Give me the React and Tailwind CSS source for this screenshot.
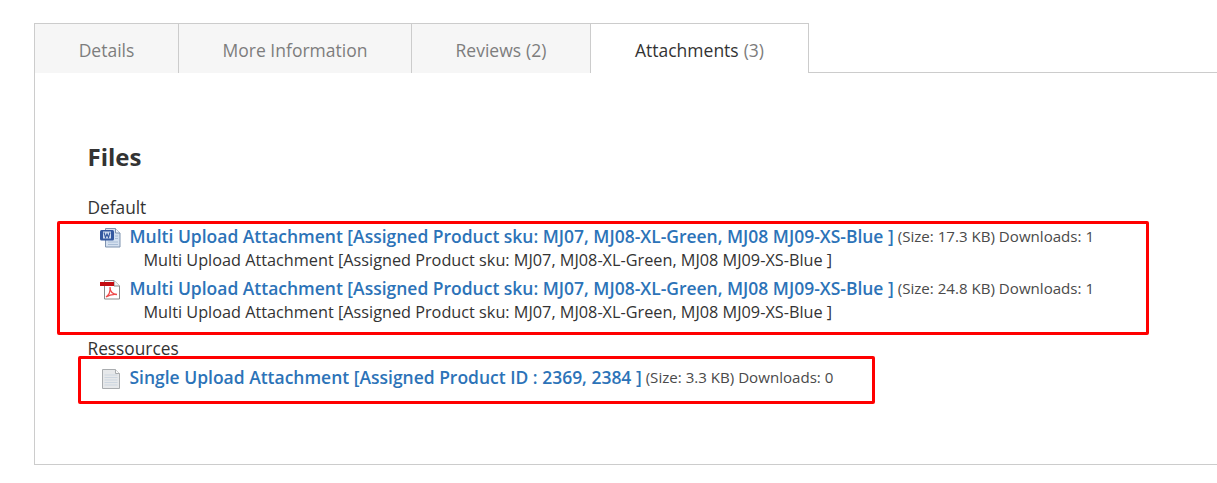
const font = { fontFamily: '"Open Sans", sans-serif' };

const WordIcon = () => (
  <svg width="22" height="20" viewBox="0 0 22 20" className="shrink-0">
    <path d="M5.500 .5h10l4.500 4.500v14h-14.500z" fill="#d5e1f0" stroke="#7f93b0" />
    <path d="M15.500 .5v4.500h4.500" fill="#f2f6fb" stroke="#7f93b0" />
    <path d="M8 14h10M8 16.500h10M15 8h3M15 10.500h3" stroke="#a9bdd6" />
    <rect x="0" y="2" width="14" height="10.500" rx="1.500" fill="#34589f" />
    <rect x="3" y="3.500" width="8" height="7" fill="#cfdcef" />
    <path d="M4 4.500l1.500 5 1.500-3.500 1.500 3.500 1.500-5" fill="none" stroke="#34589f" strokeWidth="1.100" />
  </svg>
);

const PdfIcon = () => (
  <svg width="22" height="20" viewBox="0 0 22 20" className="shrink-0">
    <path d="M4.500 .5h9.500l5.500 5.500v13h-15z" fill="#fff" stroke="#8a8a8a" />
    <path d="M14 .5v5.500h5.500" fill="#f2f2f2" stroke="#8a8a8a" />
    <rect x="0" y="2" width="14" height="4" fill="#c40d12" />
    <path d="M6 17c3-2 4.500-6 4-10 0 4 2.500 7 7 7.500-4-.5-8 .5-11 2.500z" fill="none" stroke="#ee4a4a" strokeWidth="1.300" />
  </svg>
);

const TextIcon = () => (
  <svg width="22" height="20" viewBox="0 0 22 20" className="shrink-0">
    <path d="M2.500 .5h13l4 4v15h-17z" fill="#e6e8ea" stroke="#a9acaf" />
    <path d="M15.500 .5v4h4" fill="#fafafa" stroke="#a9acaf" />
    <path d="M4.500 6h13M4.500 8.500h13M4.500 11h13M4.500 13.500h13M4.500 16h13" stroke="#cdd6e0" />
  </svg>
);

const Tab = ({ label, count, width, active }) => (
  <div
    className={
      active
        ? "flex h-[50px] items-center justify-center border border-b-0 border-[#cccccc] bg-white pt-[3px] text-[17.500px] text-[#333333]"
        : "flex h-[50px] items-center justify-center border-t border-l border-[#cccccc] bg-[#f6f6f6] pt-[3px] text-[17.500px] text-[#7d7d7d]"
    }
    style={{ width }}
  >
    {label}
    {count && <span className="ml-[5px] text-[#7d7d7d]">{count}</span>}
  </div>
);

const FileRow = ({ icon, title, size, downloads, note }) => (
  <div className="mb-[4px]">
    <div className="flex h-[26px] items-center">
      <div className="w-[42px] pt-[3px] pl-[12px]">{icon}</div>
      <a className="text-[17.480px] font-semibold whitespace-nowrap text-[#2c73b8]">{title}</a>
      <span className="ml-[4px] text-[15.100px] whitespace-nowrap text-[#4a4a4a]">
        (Size: {size}) Downloads: {downloads}
      </span>
    </div>
    {note && <div className="mt-[1px] h-[21px] pl-[56px] text-[16.250px] leading-[21px] text-[#333333]">{note}</div>}
  </div>
);

const multiTitle = "Multi Upload Attachment [Assigned Product sku: MJ07, MJ08-XL-Green, MJ08 MJ09-XS-Blue ]";

const App = () => {
  return (
    <div className="relative h-[483px] w-[1217px] overflow-hidden bg-white" style={font}>
      <div className="pt-[23px] pl-[34px]">
        <div className="flex items-start">
          <Tab label="Details" width={144} />
          <Tab label="More Information" width={233} />
          <Tab label="Reviews" count="(2)" width={179} />
          <Tab label="Attachments" count="(3)" width={219} active />
          <div className="mt-[49px] h-px flex-1 bg-[#cccccc]" />
        </div>
        <div className="h-[392px] border-b border-l border-[#cccccc] pt-[68px] pl-[52.500px]">
          <h2 className="text-[24px] leading-[32px] font-bold text-[#333333]">Files</h2>
          <div className="mt-[24px] h-[22px] text-[17.300px] leading-[22px] text-[#333333]">Default</div>
          <div className="mt-[4px]">
            <FileRow icon={<WordIcon />} title={multiTitle} size="17.3 KB" downloads="1" note={multiTitle} />
            <FileRow icon={<PdfIcon />} title={multiTitle} size="24.8 KB" downloads="1" note={multiTitle} />
          </div>
          <div className="mt-[15px] h-[22px] text-[17.300px] leading-[22px] text-[#333333]">Ressources</div>
          <div className="mt-[4px]">
            <FileRow icon={<TextIcon />} title="Single Upload Attachment [Assigned Product ID : 2369, 2384 ]" size="3.3 KB" downloads="0" />
          </div>
        </div>
      </div>
      {/* red annotation boxes */}
      <div className="absolute top-[221px] left-[57px] h-[114px] w-[1092px] rounded-[2px] border-[3px] border-[#ff0000]" />
      <div className="absolute top-[356px] left-[78px] h-[48px] w-[797px] rounded-[2px] border-[3px] border-[#ff0000]" />
    </div>
  );
};

export default App;
